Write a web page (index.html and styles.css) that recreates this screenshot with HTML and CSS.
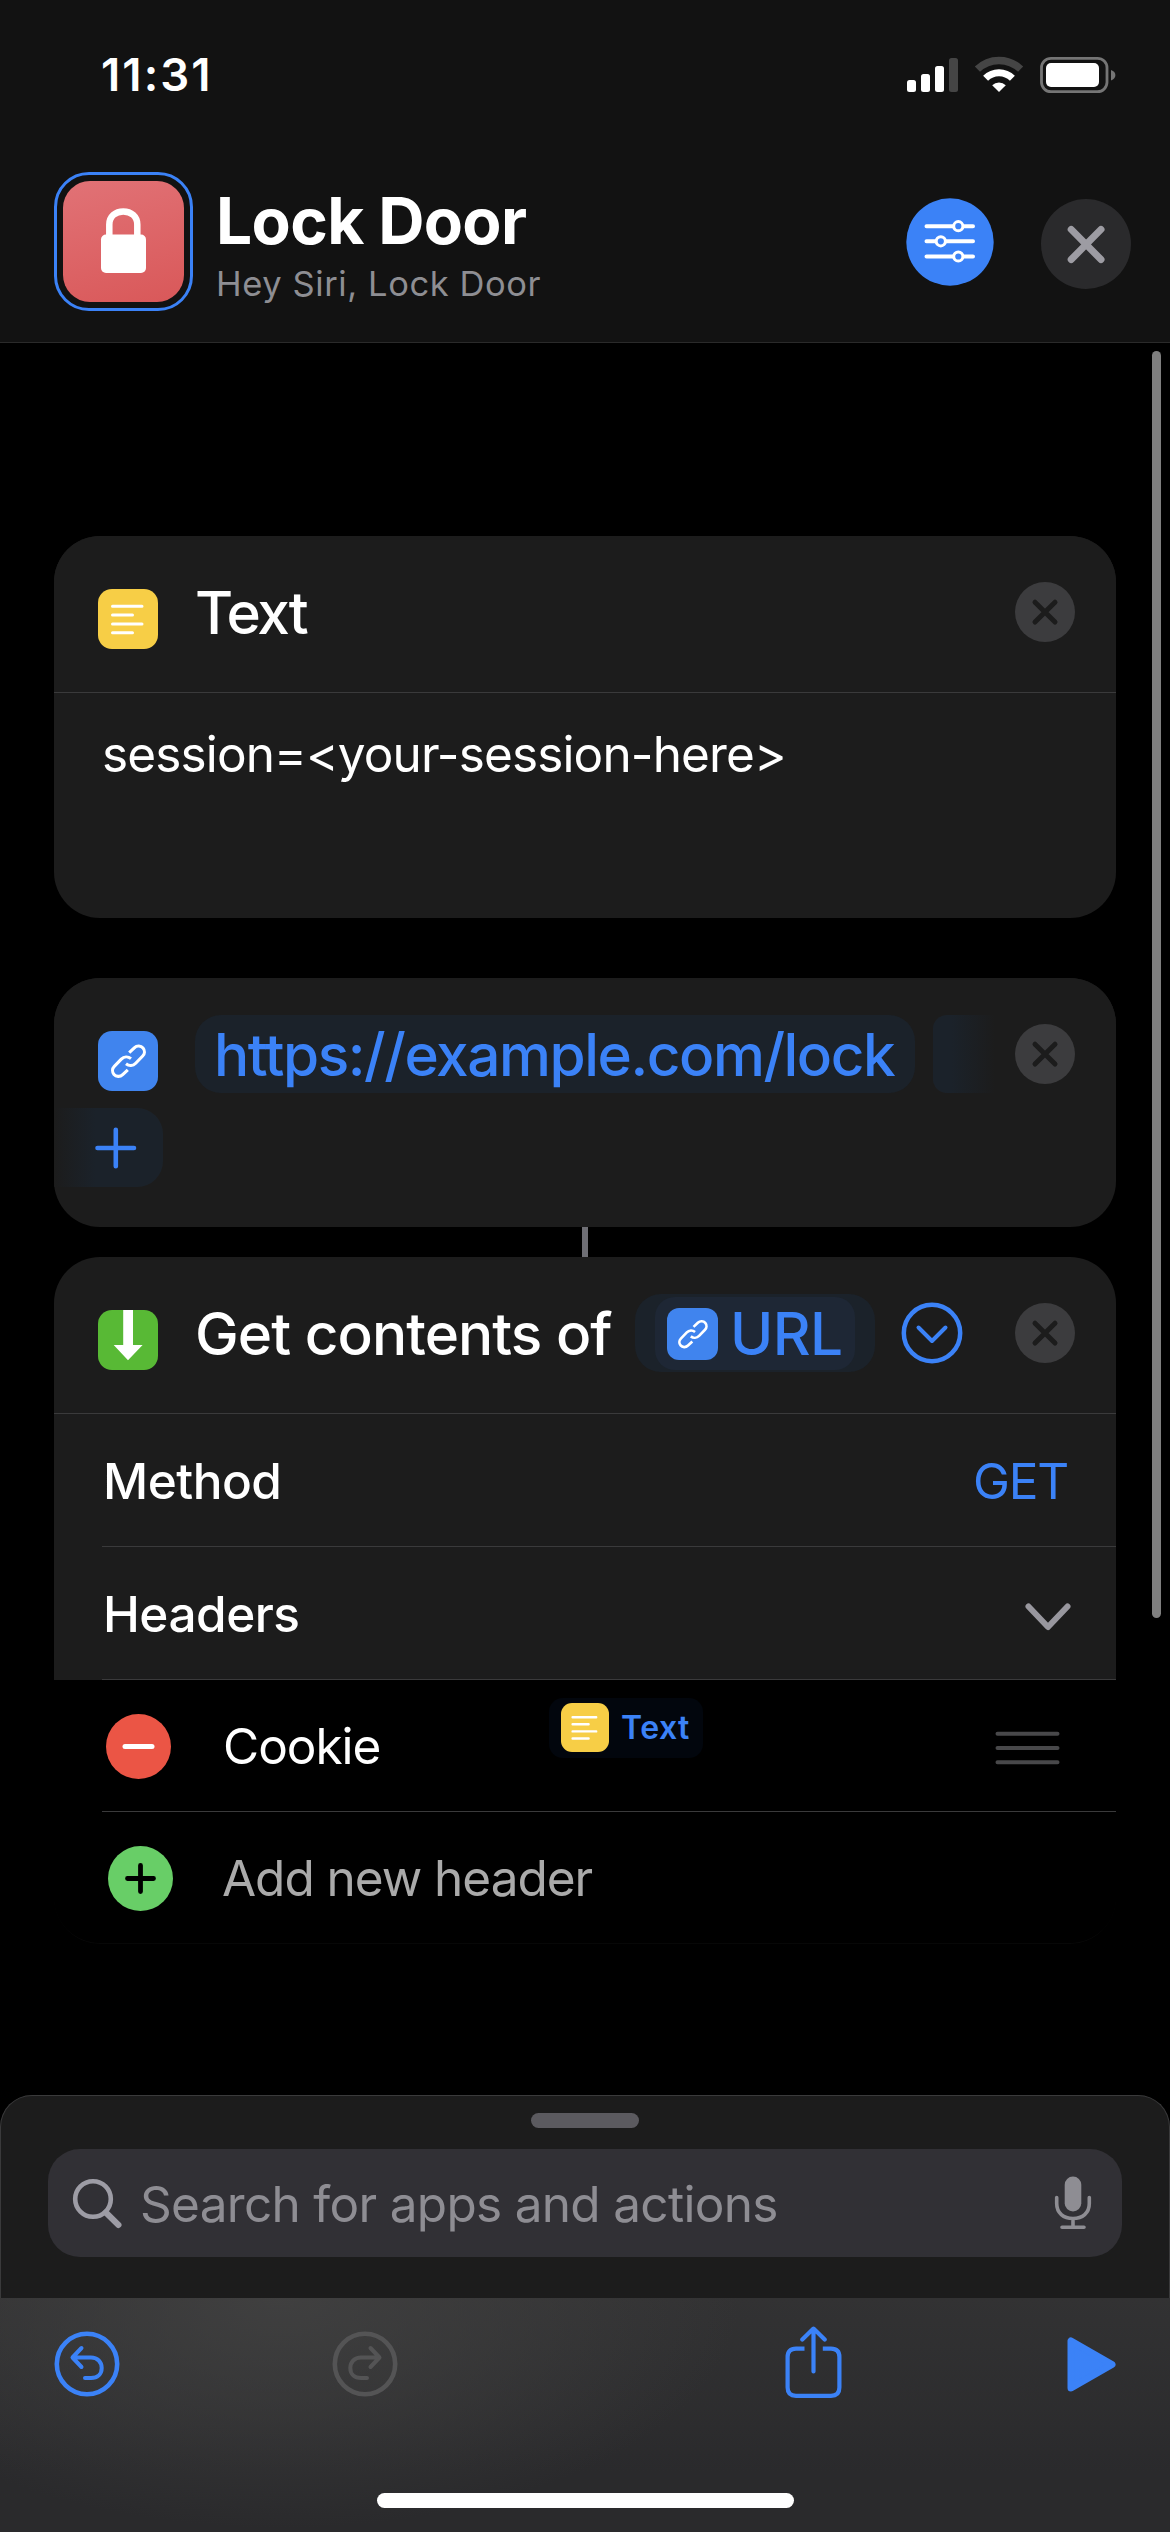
FILE: index.html
```html
<!DOCTYPE html>
<html lang="en">
<head>
<meta charset="utf-8">
<title>Lock Door</title>
<link rel="stylesheet" href="styles.css">
</head>
<body>
<svg class="defs" aria-hidden="true">
  <symbol id="link" viewBox="0 0 60 60">
    <path d="M31.2 21.6L36.3 16.8C39 14.2 43 14.6 45 17C47 19.4 46.9 22.8 44.7 25L37.7 32.3C35 35 31 35.2 28 32.8M29.8 38.8L24.7 43.6C22 46.2 18 45.8 16 43.4C14 41 14.1 37.6 16.3 35.4L23.3 28.1C26 25.4 30 25.2 33 27.6" fill="none" stroke="#fff" stroke-width="3.1"/>
  </symbol>
  <symbol id="lines" viewBox="0 0 60 60">
    <path d="M14.5 17.2H44M14.5 26H34.5M14.5 34.9H44M14.5 43.8H34.5" fill="none" stroke="#fff" stroke-width="3" stroke-linecap="round"/>
  </symbol>
  <symbol id="cross" viewBox="0 0 60 60">
    <circle cx="30" cy="30" r="30" fill="#3c3c3e"/>
    <path d="M20 20.2L40 40M40 20.2L20 40" fill="none" stroke="#1c1c1c" stroke-width="5" stroke-linecap="round"/>
  </symbol>
</svg>
<div class="screen">
  <header class="topbar">
    <div class="status">
      <span class="time">11:31</span>
      <svg class="status-icons" width="210" height="38" viewBox="906 55 210 38">
        <g fill="#fff">
          <rect x="907" y="79" width="9" height="12" rx="2.5"/>
          <rect x="921" y="73" width="9" height="18" rx="2.5"/>
          <rect x="935" y="65" width="9" height="26" rx="2.5"/>
          <rect x="949" y="57" width="9" height="34" rx="2.5" fill="#454545"/>
        </g>
        <g fill="none">
          <path d="M977.4 68.2A31 31 0 0 1 1020.6 68.2" stroke="#454545" stroke-width="7.4"/>
          <path d="M985.6 77.2A19 19 0 0 1 1012.4 77.2" stroke="#fff" stroke-width="7"/>
        </g>
        <path d="M999 91L992.2 84.2A9.8 9.8 0 0 1 1005.8 84.2Z" fill="#fff"/>
        <rect x="1041.5" y="57.3" width="65.5" height="33.4" rx="9.5" fill="none" stroke="#757575" stroke-width="2.8"/>
        <rect x="1046" y="62" width="53" height="24" rx="5" fill="#fff"/>
        <path d="M1111 69Q1115.4 70.5 1115.4 74T1111 79.500Z" fill="#757575"/>
      </svg>
    </div>
    <div class="title-row">
      <div class="shortcut-icon">
        <div class="shortcut-glyph">
          <svg width="120" height="120" viewBox="0 0 120 120"><rect x="38" y="53.500" width="45" height="38.500" rx="5" fill="#fff"/><path d="M46.300 56V43.500C46.300 35.500 52.500 30.400 60.300 30.400S74.300 35.500 74.300 43.500V56" fill="none" stroke="#fff" stroke-width="6.500"/></svg>
        </div>
      </div>
      <div class="titles">
        <div class="name">Lock Door</div>
        <div class="phrase">Hey Siri, Lock Door</div>
      </div>
      <svg class="settings" width="88" height="88" viewBox="0 0 88 88">
        <circle cx="44" cy="44" r="43.700" fill="#3b82f7"/>
        <path d="M20.500 28.200H67M20.500 43.300H67M20.500 58.500H67" stroke="#fff" stroke-width="4" stroke-linecap="round"/>
        <g fill="#3b82f7" stroke="#fff" stroke-width="3"><circle cx="52.300" cy="28.200" r="4.600"/><circle cx="34.800" cy="43.300" r="4.600"/><circle cx="52.300" cy="58.500" r="4.600"/></g>
      </svg>
      <svg class="close" width="90" height="90" viewBox="0 0 90 90">
        <circle cx="45" cy="45" r="45" fill="#2a2a2c"/>
        <path d="M30.200 30.400L60 60.500M60 30.400L30.200 60.500" stroke="#9d9ca3" stroke-width="7" stroke-linecap="round"/>
      </svg>
    </div>
  </header>

  <main class="editor">
    <div class="scrollbar"></div>
    <section class="card card-text">
      <div class="head ruled">
        <svg class="app yellow"><use href="#lines"/></svg>
        <span class="label tight">Text</span>
        <svg class="remove"><use href="#cross"/></svg>
      </div>
      <div class="text-value">session=&lt;your-session-here&gt;</div>
    </section>

    <section class="card card-url">
      <div class="head">
        <svg class="app blue"><use href="#link"/></svg>
        <span class="pill url">https://example.com/lock</span>
        <span class="pill-start"></span>
        <svg class="remove"><use href="#cross"/></svg>
      </div>
      <div class="pill-end">
        <svg width="44" height="46" viewBox="0 0 44 46"><path d="M3.500 23H40M21.800 4.700V41.300" stroke="#3b82f7" stroke-width="4.600" stroke-linecap="round"/></svg>
      </div>
    </section>

    <div class="connector"></div>

    <section class="card card-get">
      <div class="head ruled">
        <svg class="app green" viewBox="0 0 60 60"><path d="M25.200 0H35V35H44.600L30 50.300L15.700 35H25.200Z" fill="#fff"/></svg>
        <span class="label get">Get contents of</span>
        <span class="pill var"><span class="chip"><svg class="mini blue"><use href="#link"/></svg>URL</span></span>
        <svg class="more" width="62" height="62" viewBox="0 0 62 62"><circle cx="31" cy="31" r="28.200" fill="none" stroke="#3b82f7" stroke-width="4.500"/><path d="M17.500 25.500L31 39L44.500 25.500" fill="none" stroke="#3b82f7" stroke-width="4" stroke-linecap="round" stroke-linejoin="round"/></svg>
        <svg class="remove"><use href="#cross"/></svg>
      </div>
      <div class="row"><span class="row-name">Method</span><span class="value">GET</span></div>
      <div class="row"><span class="row-name">Headers</span>
        <svg class="disclosure" width="46" height="28" viewBox="0 0 46 28"><path d="M3.500 3.500L23 24L42.500 3.500" fill="none" stroke="#98979e" stroke-width="6" stroke-linecap="round" stroke-linejoin="round"/></svg>
      </div>
      <div class="headers">
        <div class="row item">
          <svg class="dot" viewBox="0 0 65 65"><circle cx="32.500" cy="32.500" r="32.500" fill="#eb5545"/><path d="M19 32.500H46" stroke="#fff" stroke-width="5" stroke-linecap="round"/></svg>
          <span class="key">Cookie</span>
          <span class="tag"><svg class="tag-icon yellow"><use href="#lines"/></svg>Text</span>
          <svg class="grip" width="65" height="34" viewBox="0 0 65 34"><path d="M2.500 2.700H62.500M2.500 17H62.500M2.500 31.300H62.500" stroke="#48484a" stroke-width="4" stroke-linecap="round"/></svg>
        </div>
        <div class="row item add">
          <svg class="dot" viewBox="0 0 65 65"><circle cx="32.500" cy="32.500" r="32.500" fill="#68ce67"/><path d="M19.500 32.500H45.500M32.500 19.500V45.500" stroke="#000" stroke-width="4.800" stroke-linecap="round"/></svg>
          <span class="key">Add new header</span>
        </div>
      </div>
    </section>
  </main>

  <section class="sheet">
    <div class="grabber"></div>
    <div class="search">
      <svg width="52" height="52" viewBox="0 0 52 52"><circle cx="22" cy="22" r="17.800" fill="none" stroke="#9d9ca5" stroke-width="4.600"/><path d="M34.800 35.500L47.500 48" stroke="#9d9ca5" stroke-width="6" stroke-linecap="round"/></svg>
      <span class="placeholder">Search for apps and actions</span>
      <svg class="mic" width="38" height="54" viewBox="0 0 38 54"><rect x="10.700" y="0.500" width="16.600" height="35" rx="8.300" fill="#8e8d93"/><path d="M2.700 21.500V27.500C2.700 37 9.500 42.500 19 42.500S35.300 37 35.300 27.500V21.500M19 42.500V51M8 51.300H30" fill="none" stroke="#8e8d93" stroke-width="3.600" stroke-linecap="round"/></svg>
    </div>
  </section>

  <footer class="toolbar">
    <div class="tools">
      <svg class="undo" width="66" height="66" viewBox="0 0 66 66"><g fill="none" stroke="#3b82f7" stroke-width="4.600" stroke-linecap="round" stroke-linejoin="round"><circle cx="33" cy="33" r="30.200"/><path d="M27.500 17L18.500 26.500L27.500 36M19 26.500H37C43.500 26.500 47.700 31 47.700 37S43.500 47 37 47H31" stroke-width="4"/></g></svg>
      <svg class="redo" width="66" height="66" viewBox="0 0 66 66"><g fill="none" stroke="#545455" stroke-width="4.600" stroke-linecap="round" stroke-linejoin="round"><circle cx="33" cy="33" r="30.200"/><path d="M38.500 17L47.500 26.500L38.500 36M47 26.500H29C22.500 26.500 18.300 31 18.300 37S22.500 47 29 47H35" stroke-width="4"/></g></svg>
      <svg class="share" width="57" height="73" viewBox="0 0 57 73"><g fill="none" stroke="#3b82f7" stroke-width="4.200"><path d="M19.500 22.600H11Q2.600 22.600 2.600 31V61.500Q2.600 69.800 11 69.800H46Q54.400 69.800 54.400 61.500V31Q54.400 22.600 46 22.600H37.800"/><path d="M28.500 45.500V3M17.300 13.500L28.500 2.600L39.700 13.500" stroke-linecap="round" stroke-linejoin="round"/></g></svg>
      <svg class="play" width="49" height="55" viewBox="0 0 49 55"><path d="M4 4V51L45 27.500Z" fill="#3b82f7" stroke="#3b82f7" stroke-width="7" stroke-linejoin="round"/></svg>
    </div>
    <div class="home"></div>
  </footer>
</div>
</body>
</html>
```
FILE: styles.css
```css
* { box-sizing: border-box; }
body { margin: 0; background: #000; }
svg { display: block; flex: none; }
.defs { position: absolute; width: 0; height: 0; }

.screen {
  width: 1170px;
  height: 2532px;
  display: flex;
  flex-direction: column;
  background: #000;
  color: #fff;
  font-family: Inter, "Liberation Sans", sans-serif;
  font-size: 49.5px;
  white-space: nowrap;
  overflow: hidden;
}

/* Top bar */
.topbar { height: 343px; background: #121212; border-bottom: 1px solid #2a2a2a; }
.status {
  height: 149px;
  padding: 0 54px 0 101px;
  display: flex;
  align-items: center;
  justify-content: space-between;
}
.time { font-size: 45.5px; font-weight: 600; line-height: 54px; letter-spacing: 2.1px; }
.title-row {
  height: 193px;
  padding: 0 39px 8px 54px;
  display: flex;
  align-items: center;
}
.shortcut-icon { width: 139px; height: 139px; padding: 6px; border: 3px solid #3b82f7; border-radius: 35px; flex: none; }
.shortcut-glyph { width: 121px; height: 121px; border-radius: 27px; background: linear-gradient(165deg, #e17276, #d95859); }
.titles { flex: 1; padding-left: 23px; margin-top: 6px; }
.name { font-size: 64px; font-weight: 700; line-height: 78px; letter-spacing: -0.64px; }
.phrase { font-size: 34.5px; line-height: 48px; letter-spacing: 0.59px; color: #8e8e93; }
.close { margin: 5px 0 0 47px; }

/* Editor */
.editor { position: relative; height: 1752px; padding: 193px 54px 0; }
.scrollbar { position: absolute; top: 8px; right: 9px; width: 9px; height: 1267px; border-radius: 5px; background: #7f7f7f; }
.card { background: #1c1c1c; border-radius: 46px; overflow: hidden; }
.card-text { height: 382px; margin-bottom: 60px; }
.card-url { height: 249px; }
.card-get { height: 687px; background: #000; }
.connector { width: 6px; height: 30px; margin: 0 auto; background: #6e6e74; }

.head {
  height: 130px;
  padding: 37px 41px 15px 44px;
  display: flex;
  align-items: center;
  background: #1c1c1c;
}
.head.ruled { height: 157px; padding-bottom: 41px; border-bottom: 1px solid #3a3a3b; }
.app { width: 60px; height: 60px; margin: 14px 37px 0 0; border-radius: 14px; }
.yellow { background: #f7ce46; }
.blue { background: #4084ee; }
.green { background: #58b935; }
.label { margin-top: 2px; font-size: 58.5px; font-weight: 500; line-height: 78px; }
.tight { letter-spacing: -2.2px; }
.get { width: 440px; letter-spacing: -0.95px; }
.remove { width: 60px; height: 60px; margin-left: auto; }
.text-value { padding: 31px 0 0 48px; line-height: 60px; letter-spacing: -0.87px; }

.pill { height: 78px; border-radius: 26px; background: #1b222a; font-size: 58.5px; font-weight: 500; line-height: 79px; color: #3b82f7; }
.url { width: 720px; padding-left: 19px; letter-spacing: -1.45px; }
.pill-start { width: 62px; height: 78px; margin-left: 18px; border-radius: 14px 0 0 14px; background: linear-gradient(90deg, #1b222a 30%, #1c1c1c); }
.pill-end {
  width: 109px;
  height: 79px;
  padding-left: 40px;
  display: flex;
  align-items: center;
  border-radius: 0 26px 26px 0;
  background: linear-gradient(90deg, #1c1c1c, #1b222a 38%);
}
.var { width: 240px; padding: 3px 20px; }
.chip {
  height: 73px;
  padding-left: 12px;
  display: flex;
  align-items: center;
  gap: 12px;
  border-radius: 20px;
  background: #1e2735;
  letter-spacing: -0.6px;
}
.mini { width: 51px; height: 52px; border-radius: 12px; }
.more { margin-left: 26px; }

.row {
  height: 133px;
  padding-left: 48px;
  display: flex;
  align-items: center;
  background: linear-gradient(#3a3a3b, #3a3a3b) 48px 100% / 100% 1px no-repeat #1c1c1c;
}
.row-name { padding: 0 0 0 1px; font-weight: 500; letter-spacing: -0.5px; }
.value { margin: 0 48px 0 auto; letter-spacing: -1.2px; color: #3b82f7; }
.disclosure { margin: 6px 45px 0 auto; }
.headers { height: 264px; border-bottom: 1px solid #070707; border-radius: 0 0 46px 46px; }
.item { height: 132px; padding-left: 52px; background-color: transparent; }
.dot { width: 65px; height: 65px; }
.key { width: 378px; padding-left: 52px; letter-spacing: -1.03px; }
.tag {
  width: 154px;
  height: 60px;
  margin-top: 18px;
  padding-left: 12px;
  display: flex;
  align-items: center;
  align-self: flex-start;
  gap: 12px;
  border-radius: 14px;
  background: #02060d;
  font-size: 32px;
  font-weight: 600;
  line-height: 56px;
  letter-spacing: 0.5px;
  color: #3b82f7;
}
.tag-icon { width: 48px; height: 49px; margin-top: -1px; border-radius: 11px; }
.grip { margin: 4px 56px 0 auto; }
.add { padding-left: 54px; background: none; }
.add .key { padding-left: 49px; color: #aaa; }

/* Action search sheet */
.sheet {
  height: 203px;
  padding: 17px 47px 0;
  border: 1px solid #3a3a3b;
  border-bottom: 0;
  border-radius: 32px 32px 0 0;
  background: #1c1c1c;
}
.grabber { width: 108px; height: 15px; margin: 0 auto 21px; border-radius: 8px; background: #5b5a5f; }
.search {
  height: 108px;
  padding: 0 30px 0 23px;
  display: flex;
  align-items: center;
  border-radius: 32px;
  background: #313035;
}
.placeholder { flex: 1; padding: 1px 0 0 17px; letter-spacing: -0.69px; color: #8e8d93; }

/* Toolbar */
.toolbar {
  height: 234px;
  background:
    radial-gradient(ellipse 460px 230px at 280px 0, rgba(66, 66, 66, 0.85), rgba(66, 66, 66, 0)),
    linear-gradient(#323233, #2a2a2c 75%);
}
.tools { height: 195px; padding: 28px 54px 0; display: flex; }
.undo, .redo { margin-top: 5px; }
.redo { margin-left: 212px; }
.share { margin-left: 387px; }
.play { margin: 11px 0 0 auto; }
.home { width: 417px; height: 15px; margin: 0 auto; border-radius: 8px; background: #fff; }
```
